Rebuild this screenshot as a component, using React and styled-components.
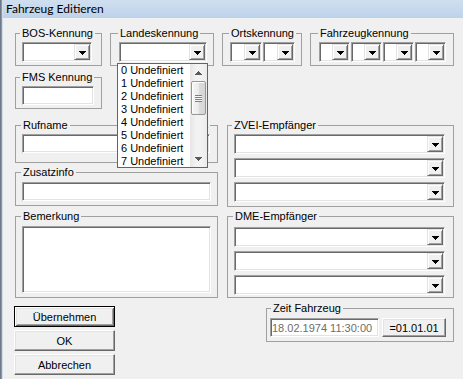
import React from "react";
import styled, { createGlobalStyle, css } from "styled-components";

const GlobalStyle = createGlobalStyle`
  *, *::before, *::after { box-sizing: border-box; }
  html, body { margin: 0; padding: 0; background: #f0f0f0; }
  body { font-family: "Liberation Sans", Arial, sans-serif; font-size: 11px; color: #000; }
`;

const Window = styled.div`
  width: 463px;
  height: 379px;
  overflow: hidden;
  display: flex;
  background: #f0f0f0;
`;

const Frame = styled.div`
  width: 3px;
  flex: none;
  background: linear-gradient(to right, #6e7987 0 1px, #8d98a6 1px 2px, #d3dce6 2px 3px);
`;

const Main = styled.div`
  flex: 1;
  min-width: 0;
  display: flex;
  flex-direction: column;
`;

const TitleBar = styled.div`
  height: 18px;
  flex: none;
  padding-left: 3px;
  background: linear-gradient(#d0dff0, #bdd2ea);
  font-family: Lato, "Liberation Sans", sans-serif;
  font-size: 12px;
  line-height: 18px;
  color: #000;
  white-space: nowrap;
`;

const Content = styled.div`
  padding: 9px 9px 0 12px;
  display: flex;
  flex-direction: column;
`;

const Row = styled.div`
  display: flex;
  align-items: flex-start;
  gap: ${(p) => p.$gap || 0}px;
  margin-top: ${(p) => p.$mt || 0}px;
  justify-content: ${(p) => (p.$between ? "space-between" : "flex-start")};
`;

const Columns = styled.div`
  display: grid;
  grid-template-columns: 203px 227px;
  column-gap: 9px;
  margin-top: 10px;
`;

const Column = styled.div`
  display: flex;
  flex-direction: column;
`;

const Group = styled.fieldset`
  margin: ${(p) => p.$mt || 0}px 0 0 0;
  min-width: 0;
  width: ${(p) => p.$w}px;
  flex: none;
  border: 1px solid #a0a0a0;
  padding: ${(p) => p.$pad};
  display: flex;
  flex-direction: ${(p) => (p.$col ? "column" : "row")};
  gap: ${(p) => p.$gap || 0}px;
`;

const Legend = styled.legend`
  padding: 0 2px;
  margin-left: ${(p) => (p.$lo || 0) - 2}px;
  font-size: 11px;
  line-height: 13px;
  white-space: nowrap;
`;

const sunken = css`
  border: 1px solid;
  border-color: #a0a0a0 #ffffff #ffffff #a0a0a0;
  box-shadow: inset 1px 1px 0 #696969, inset -1px -1px 0 #e3e3e3;
  background: #ffffff;
`;

const ComboBox = styled.div`
  ${sunken}
  position: relative;
  flex: none;
  width: ${(p) => (p.$w ? `${p.$w}px` : "100%")};
  height: ${(p) => p.$h || 20}px;
  padding: 1px;
  display: flex;
  justify-content: flex-end;
`;

const DropButton = styled.div`
  width: ${(p) => p.$bw || 16}px;
  height: 100%;
  background: #f0f0f0;
  border: 1px solid;
  border-color: #e3e3e3 #696969 #696969 #e3e3e3;
  box-shadow: inset 1px 1px 0 #ffffff, inset -1px -1px 0 #a0a0a0;
  display: flex;
  align-items: center;
  justify-content: center;
  padding-top: 1px;
`;

const TextInput = styled.input`
  ${sunken}
  flex: none;
  width: ${(p) => (p.$w ? `${p.$w}px` : "100%")};
  height: ${(p) => p.$h || 19}px;
  margin: 0;
  padding: 0 1px;
  font-family: "Liberation Sans", Arial, sans-serif;
  font-size: 11px;
  color: ${(p) => (p.$muted ? "#6d6d6d" : "#000")};
  outline: none;
`;

const TextArea = styled.textarea`
  ${sunken}
  display: block;
  width: 100%;
  height: ${(p) => p.$h}px;
  margin: 0;
  padding: 1px 2px;
  resize: none;
  font-family: "Liberation Sans", Arial, sans-serif;
  font-size: 11px;
  outline: none;
`;

const PushButton = styled.button`
  flex: none;
  width: ${(p) => p.$w}px;
  height: ${(p) => p.$h}px;
  margin: 0;
  padding: 0;
  font-family: "Liberation Sans", Arial, sans-serif;
  font-size: 11px;
  color: #000;
  background: #f0f0f0;
  border: 1px solid;
  border-color: #ffffff #696969 #696969 #ffffff;
  box-shadow: inset -1px -1px 0 #a0a0a0, inset 1px 1px 0 #e3e3e3;
  ${(p) =>
    p.$default &&
    css`
      border: 1px solid #000;
      box-shadow: inset 1px 1px 0 #ffffff, inset -1px -1px 0 #696969,
        inset 2px 2px 0 #e3e3e3, inset -2px -2px 0 #a0a0a0;
    `}
`;

const ButtonStack = styled.div`
  display: flex;
  flex-direction: column;
  gap: 3px;
  margin: 4px 0 0 -1px;
`;

const DropList = styled.div`
  position: absolute;
  left: -3px;
  top: 20px;
  width: 91px;
  height: 105px;
  background: #fff;
  border: 1px solid #646464;
  z-index: 10;
  display: flex;
`;

const Items = styled.ul`
  list-style: none;
  margin: 0;
  padding: 0;
  flex: 1;
  min-width: 0;
`;

const Item = styled.li`
  height: 13px;
  line-height: 13px;
  padding-left: 3px;
  white-space: nowrap;
  overflow: hidden;
  font-size: 11px;
`;

const ScrollBar = styled.div`
  width: 17px;
  flex: none;
  display: flex;
  flex-direction: column;
  background: linear-gradient(to right, #e6e6e6, #f2f2f2 35%, #f2f2f2 70%, #ebebeb);
`;

const ScrollArrow = styled.div`
  height: 17px;
  flex: none;
  display: flex;
  align-items: center;
  justify-content: center;
`;

const Track = styled.div`
  flex: 1;
  display: flex;
  flex-direction: column;
`;

const Thumb = styled.div`
  margin: 0 1px;
  height: 34px;
  border: 1px solid #969696;
  border-radius: 2px;
  background: linear-gradient(to right, #f6f6f6, #ebebeb 50%, #dcdcdc 51%, #d6d6d6);
  box-shadow: inset 1px 1px 0 #ffffff;
  display: flex;
  align-items: center;
  justify-content: center;
`;

const Grip = styled.div`
  width: 7px;
  height: 7px;
  background: repeating-linear-gradient(to bottom, #7f7f7f 0 1px, #f8f8f8 1px 2px);
`;

function Arrow({ color = "#000", up = false }) {
  return (
    <svg width="7" height="4" viewBox="0 0 7 4" shapeRendering="crispEdges" style={{ display: "block" }}>
      <path
        fill={color}
        transform={up ? "rotate(180 3.5 2)" : undefined}
        d="M0 0h7v1h-1v1h-1v1h-1v1h-1v-1h-1v-1h-1v-1h-1z"
      />
    </svg>
  );
}

function Combo({ w, h, bw, children }) {
  return (
    <ComboBox $w={w} $h={h}>
      <DropButton $bw={bw}>
        <Arrow />
      </DropButton>
      {children}
    </ComboBox>
  );
}

const landesItems = Array.from({ length: 8 }, (_, i) => `${i} Undefiniert`);

export default function App() {
  return (
    <>
      <GlobalStyle />
      <Window>
        <Frame />
        <Main>
          <TitleBar>Fahrzeug Editieren</TitleBar>
          <Content>
            <Row $gap={8}>
              <Group $w={87} $pad="2px 9px 3px 6px">
                <Legend>BOS-Kennung</Legend>
                <Combo w={70} />
              </Group>
              <Group $w={104} $pad="2px 6px 3px 8px">
                <Legend $lo={1}>Landeskennung</Legend>
                <Combo w={88}>
                  <DropList>
                    <Items>
                      {landesItems.map((t) => (
                        <Item key={t}>{t}</Item>
                      ))}
                    </Items>
                    <ScrollBar>
                      <ScrollArrow>
                        <Arrow up color="#5a5a5a" />
                      </ScrollArrow>
                      <Track>
                        <Thumb>
                          <Grip />
                        </Thumb>
                      </Track>
                      <ScrollArrow>
                        <Arrow color="#5a5a5a" />
                      </ScrollArrow>
                    </ScrollBar>
                  </DropList>
                </Combo>
              </Group>
              <Group $w={80} $pad="2px 6px 3px 7px" $gap={1}>
                <Legend $lo={1}>Ortskennung</Legend>
                <Combo w={32} bw={16} />
                <Combo w={32} bw={16} />
              </Group>
              <Group $w={144} $pad="2px 7px 3px 8px" $gap={1}>
                <Legend $lo={1}>Fahrzeugkennung</Legend>
                <Combo w={31} bw={16} />
                <Combo w={31} bw={16} />
                <Combo w={31} bw={16} />
                <Combo w={31} bw={16} />
              </Group>
            </Row>

            <Row $mt={5}>
              <Group $w={87} $pad="2px 7px 3px 6px">
                <Legend>FMS Kennung</Legend>
                <TextInput $w={72} readOnly value="" />
              </Group>
            </Row>

            <Columns>
              <Column>
                <Row $gap={6}>
                  <Group $w={149} $pad="2px 6px 9px 6px">
                    <Legend $lo={1}>Rufname</Legend>
                    <TextInput readOnly value="" />
                  </Group>
                  <Group $w={48} $pad="2px 7px 9px 6px">
                    <Legend>Status</Legend>
                    <Combo w={33} h={19} />
                  </Group>
                </Row>
                <Group $w={203} $mt={3} $pad="3px 6px 4px 6px">
                  <Legend $lo={1}>Zusatzinfo</Legend>
                  <TextInput readOnly value="" />
                </Group>
                <Group $w={203} $mt={4} $pad="3px 6px 4px 6px">
                  <Legend $lo={1}>Bemerkung</Legend>
                  <TextArea $h={67} readOnly value="" />
                </Group>
              </Column>
              <Column>
                <Group $w={227} $col $gap={4} $pad="2px 8px 4px 6px">
                  <Legend>ZVEI-Empfänger</Legend>
                  <Combo />
                  <Combo />
                  <Combo />
                </Group>
                <Group $w={227} $mt={3} $col $gap={4} $pad="4px 8px 2px 6px">
                  <Legend $lo={1}>DME-Empfänger</Legend>
                  <Combo />
                  <Combo />
                  <Combo />
                </Group>
              </Column>
            </Columns>

            <Row $mt={4} $between>
              <ButtonStack>
                <PushButton $w={101} $h={21} $default>
                  Übernehmen
                </PushButton>
                <PushButton $w={101} $h={21}>
                  OK
                </PushButton>
                <PushButton $w={101} $h={21}>
                  Abbrechen
                </PushButton>
              </ButtonStack>
              <Group $w={188} $gap={3} $pad="3px 7px 4px 3px">
                <Legend $lo={3}>Zeit Fahrzeug</Legend>
                <TextInput $w={109} $muted readOnly value="18.02.1974 11:30:00" />
                <PushButton $w={64} $h={19}>
                  =01.01.01
                </PushButton>
              </Group>
            </Row>
          </Content>
        </Main>
      </Window>
    </>
  );
}
